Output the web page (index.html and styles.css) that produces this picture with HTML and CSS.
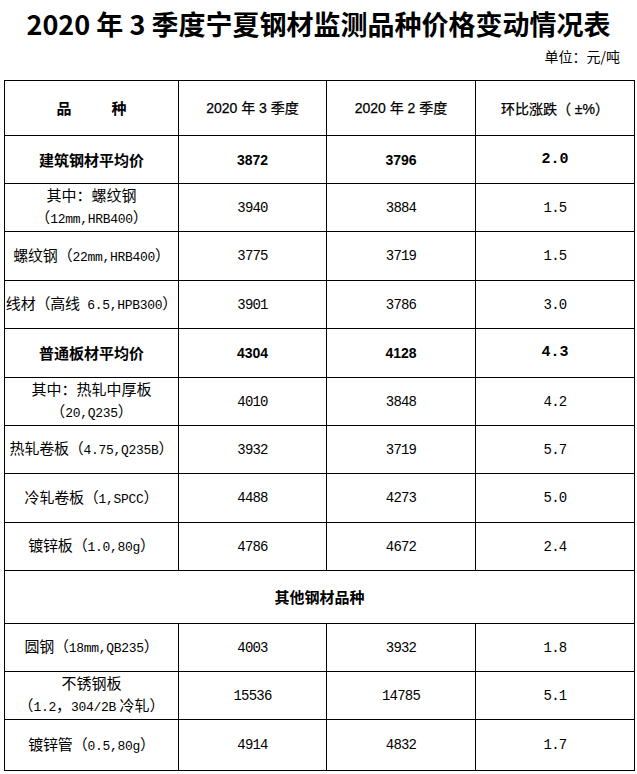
FILE: index.html
```html
<!DOCTYPE html>
<html lang="zh-CN">
<head>
<meta charset="utf-8">
<title>2020年3季度宁夏钢材监测品种价格变动情况表</title>
<link rel="stylesheet" href="styles.css">
</head>
<body>
<div class="page">
  <h1 class="title">2020 年 3 季度宁夏钢材监测品种价格变动情况表</h1>
  <div class="unit">单位：元/吨</div>
  <table class="price-table">
    <colgroup>
      <col class="c1"><col class="c2"><col class="c3"><col class="c4">
    </colgroup>
    <thead>
      <tr class="head-row">
        <th><span class="kind">品</span><span class="kind-gap"></span><span class="kind">种</span></th>
        <th class="hq">2020 年 3 季度</th>
        <th class="hq">2020 年 2 季度</th>
        <th class="hq">环比涨跌<span class="cjk">（</span> ±%<span class="cjk">）</span></th>
      </tr>
    </thead>
    <tbody>
      <tr class="avg">
        <td class="name">建筑钢材平均价</td>
        <td class="bnum">3872</td>
        <td class="bnum">3796</td>
        <td class="bpct">2.0</td>
      </tr>
      <tr>
        <td class="name">其中：螺纹钢<br>（<span class="lat">12mm,HRB400</span>）</td>
        <td class="num">3940</td>
        <td class="num">3884</td>
        <td class="num">1.5</td>
      </tr>
      <tr class="tall">
        <td class="name one">螺纹钢（<span class="lat">22mm,HRB400</span>）</td>
        <td class="num">3775</td>
        <td class="num">3719</td>
        <td class="num">1.5</td>
      </tr>
      <tr>
        <td class="name one">线材（高线<span class="lat"> 6.5,HPB300</span>）</td>
        <td class="num">3901</td>
        <td class="num">3786</td>
        <td class="num">3.0</td>
      </tr>
      <tr class="avg tall">
        <td class="name">普通板材平均价</td>
        <td class="bnum">4304</td>
        <td class="bnum">4128</td>
        <td class="bpct">4.3</td>
      </tr>
      <tr>
        <td class="name">其中：热轧中厚板<br>（<span class="lat">20,Q235</span>）</td>
        <td class="num">4010</td>
        <td class="num">3848</td>
        <td class="num">4.2</td>
      </tr>
      <tr>
        <td class="name one">热轧卷板（<span class="lat">4.75,Q235B</span>）</td>
        <td class="num">3932</td>
        <td class="num">3719</td>
        <td class="num">5.7</td>
      </tr>
      <tr class="tall">
        <td class="name one">冷轧卷板（<span class="lat">1,SPCC</span>）</td>
        <td class="num">4488</td>
        <td class="num">4273</td>
        <td class="num">5.0</td>
      </tr>
      <tr>
        <td class="name one">镀锌板（<span class="lat">1.0,80g</span>）</td>
        <td class="num">4786</td>
        <td class="num">4672</td>
        <td class="num">2.4</td>
      </tr>
      <tr class="section">
        <td colspan="4">其他钢材品种</td>
      </tr>
      <tr>
        <td class="name one">圆钢（<span class="lat">18mm,QB235</span>）</td>
        <td class="num">4003</td>
        <td class="num">3932</td>
        <td class="num">1.8</td>
      </tr>
      <tr class="r47">
        <td class="name">不锈钢板<br>（<span class="lat">1.2</span>，<span class="lat">304/2B</span> 冷轧）</td>
        <td class="num">15536</td>
        <td class="num">14785</td>
        <td class="num">5.1</td>
      </tr>
      <tr class="r50">
        <td class="name one">镀锌管（<span class="lat">0.5,80g</span>）</td>
        <td class="num">4914</td>
        <td class="num">4832</td>
        <td class="num">1.7</td>
      </tr>
    </tbody>
  </table>
</div>
</body>
</html>
```

FILE: styles.css
```css
html, body {
  margin: 0;
  padding: 0;
  background: #ffffff;
}

body {
  color: #000000;
  font-family: "Noto Sans CJK SC", "Liberation Sans", sans-serif;
  text-spacing-trim: space-all;
}

.page {
  width: 637px;
  padding-top: 6px;
}

.title {
  margin: 0;
  font-size: 27px;
  line-height: 36px;
  font-weight: 700;
  text-align: center;
}

.unit {
  margin-top: 4px;
  padding-right: 17px;
  text-align: right;
  font-size: 14px;
  line-height: 20px;
}

.price-table {
  margin: 14px 0 0 4px;
  width: 630px;
  border-collapse: collapse;
  table-layout: fixed;
}

.c1 { width: 174px; }
.c2 { width: 148px; }
.c3 { width: 149px; }
.c4 { width: 159px; }

.price-table th,
.price-table td {
  border: 1px solid #000000;
  padding: 0;
  text-align: center;
  vertical-align: middle;
  font-size: 15px;
  line-height: 22px;
  font-weight: 400;
}

.price-table tbody tr {
  height: 48px;
}

.price-table tbody tr.tall {
  height: 49px;
}

.price-table thead tr.head-row {
  height: 55px;
}

.price-table th {
  font-weight: 700;
}

.price-table th.hq {
  font-family: "Liberation Sans", "Noto Sans CJK SC", sans-serif;
  font-size: 14px;
  font-weight: 400;
  -webkit-text-stroke: 0.25px #000;
}

.cjk {
  font-family: "Noto Sans CJK SC", sans-serif;
}

.kind-gap {
  display: inline-block;
  width: 40px;
}

.name {
  font-family: "Noto Sans CJK SC", sans-serif;
}

.price-table td.one {
  white-space: nowrap;
  letter-spacing: -0.2px;
}

.lat {
  font-family: "Liberation Mono", monospace;
  font-size: 13px;
  letter-spacing: -0.3px;
}

.price-table td.num {
  font-family: "Liberation Mono", monospace;
  font-size: 14px;
  letter-spacing: -0.8px;
}

.price-table tr.avg td {
  font-weight: 700;
}

.price-table td.bnum {
  font-family: "Liberation Sans", sans-serif;
  font-size: 14px;
}

.price-table td.bpct {
  font-family: "Liberation Mono", monospace;
  font-size: 15px;
}

.price-table tr.section {
  height: 53px;
}

.price-table tr.section td {
  font-weight: 700;
}

.price-table tbody tr.r47 {
  height: 46px;
}

.price-table tbody tr.r50 {
  height: 51px;
}
```
